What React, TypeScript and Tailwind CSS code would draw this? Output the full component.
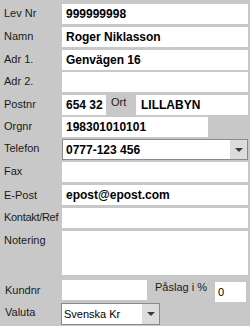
import React from "react";

const font = { fontFamily: '"Liberation Sans", Arial, sans-serif' };

function Label({ children, className = "" }: { children: React.ReactNode; className?: string }) {
  return (
    <div className={"w-[62px] shrink-0 pl-[4px] pt-[3px] text-[11px] leading-[13px] text-[#1a1a1a] whitespace-nowrap " + className}>
      {children}
    </div>
  );
}

function Field({ value = "", className = "" }: { value?: string; className?: string }) {
  return (
    <div className={"bg-white h-full pl-[4px] flex items-center text-[12px] font-bold text-black whitespace-nowrap " + className}>
      {value}
    </div>
  );
}

function Arrow() {
  return (
    <div className="w-[17px] h-full bg-[#dcdcdc] flex items-center justify-center">
      <svg width="8" height="4" viewBox="0 0 8 4">
        <polygon points="0,0 8,0 4,4" fill="#3a3a3a" />
      </svg>
    </div>
  );
}

export default function App() {
  return (
    <div className="w-[250px] h-[326px] bg-[#c8c8c8] overflow-hidden pt-[4px]" style={font}>
      <div className="flex h-[20px]">
        <Label>Lev Nr</Label>
        <Field value="999999998" className="flex-1 mr-[2px]" />
      </div>
      <div className="flex h-[20px] mt-[3px]">
        <Label>Namn</Label>
        <Field value="Roger Niklasson" className="flex-1 mr-[2px]" />
      </div>
      <div className="flex h-[20px] mt-[3px]">
        <Label>Adr 1.</Label>
        <Field value="Genvägen 16" className="flex-1 mr-[2px]" />
      </div>
      <div className="flex h-[20px] mt-[2px]">
        <Label>Adr 2.</Label>
        <Field className="flex-1 mr-[2px]" />
      </div>
      <div className="flex h-[20px] mt-[3px]">
        <Label>Postnr</Label>
        <Field value="654 32" className="w-[44px] pl-[3px]" />
        <div className="w-[30px] pl-[5px] pt-[1px] text-[11px] leading-[13px] text-[#1a1a1a]">Ort</div>
        <Field value="LILLABYN" className="flex-1 mr-[2px] pl-[5px]" />
      </div>
      <div className="flex h-[20px] mt-[2px]">
        <Label>Orgnr</Label>
        <Field value="198301010101" className="w-[146px]" />
      </div>
      <div className="flex h-[21px] mt-[2px]">
        <Label>Telefon</Label>
        <div className="flex-1 mr-[2px] flex bg-white border border-[#8a8a8a] h-full">
          <div className="flex-1 pl-[3px] flex items-center text-[12px] font-bold text-black">0777-123 456</div>
          <Arrow />
        </div>
      </div>
      <div className="flex h-[20px] mt-[2px]">
        <Label>Fax</Label>
        <Field className="flex-1 mr-[2px]" />
      </div>
      <div className="flex h-[20px] mt-[3px]">
        <Label className="pt-[4px]">E-Post</Label>
        <Field value="epost@epost.com" className="flex-1 mr-[2px]" />
      </div>
      <div className="flex h-[20px] mt-[3px]">
        <Label className="pt-[2px] pl-[3px] tracking-[-0.3px]">Kontakt/Ref</Label>
        <Field className="flex-1 mr-[2px]" />
      </div>
      <div className="flex h-[44px] mt-[3px]">
        <Label className="pt-[3px]">Notering</Label>
        <Field className="flex-1 mr-[2px]" />
      </div>
      <div className="flex h-[20px] mt-[5px]">
        <Label className="pl-[5px] pt-[4px]">Kundnr</Label>
        <Field className="w-[85px]" />
        <div className="w-[68px] pl-[8px] pt-[1px] text-[11px] leading-[13px] text-[#1a1a1a] whitespace-nowrap">Påslag i %</div>
        <div className="w-[31px] h-[20px] mt-[2px] bg-white pl-[3px] flex items-center text-[11px] text-black">0</div>
      </div>
      <div className="flex h-[22px] mt-[3px]">
        <Label className="pl-[5px] pt-[2px]">Valuta</Label>
        <div className="w-[99px] flex bg-white border border-[#8a8a8a] h-full -ml-[1px]">
          <div className="flex-1 pl-[2px] flex items-center text-[11px] text-black">Svenska Kr</div>
          <Arrow />
        </div>
      </div>
    </div>
  );
}
